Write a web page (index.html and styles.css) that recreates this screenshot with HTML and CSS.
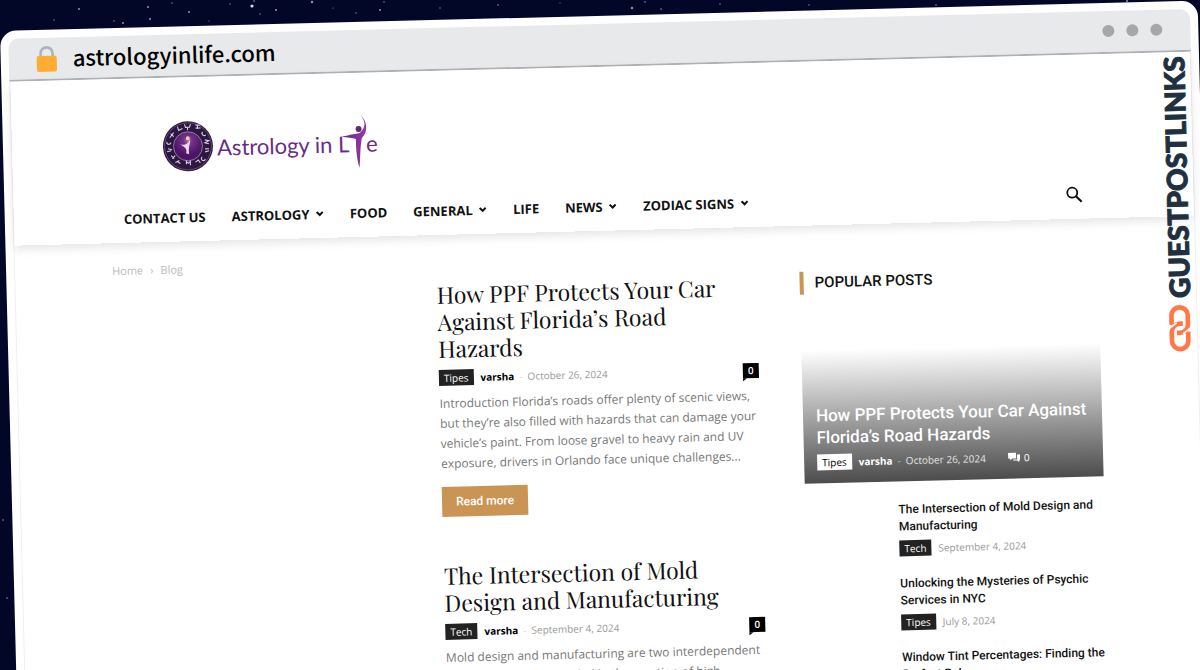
FILE: index.html
```html
<!DOCTYPE html>
<html lang="en">
<head>
<meta charset="utf-8">
<meta name="viewport" content="width=device-width, initial-scale=1">
<title>Astrology in Life - Blog</title>
<link rel="stylesheet" href="styles.css">
</head>
<body>
<svg class="stars" width="1200" height="670" aria-hidden="true">
  <g fill="#8f93b5">
    <circle cx="79" cy="9" r="1"/><circle cx="54" cy="20" r=".7"/><circle cx="114" cy="21" r=".7"/><circle cx="123" cy="23" r="1"/><circle cx="150" cy="19" r="1"/><circle cx="148" cy="7" r="1"/><circle cx="172" cy="3" r=".7"/><circle cx="189" cy="12" r="1"/><circle cx="209" cy="21" r=".6"/><circle cx="230" cy="4" r=".7"/><circle cx="252" cy="6" r="1.6" fill="#d5d7ea"/><circle cx="254" cy="1" r=".8"/><circle cx="260" cy="14" r=".7"/><circle cx="276" cy="10" r="1.1"/><circle cx="312" cy="2" r="1.2"/><circle cx="333" cy="8" r=".6"/><circle cx="356" cy="13" r=".7"/><circle cx="380" cy="10" r="1"/><circle cx="384" cy="2" r=".7"/><circle cx="440" cy="8" r=".7"/><circle cx="498" cy="5" r=".8"/><circle cx="560" cy="3" r=".6"/><circle cx="632" cy="8" r="1.2"/><circle cx="645" cy="2" r=".8"/><circle cx="661" cy="9" r=".8"/><circle cx="720" cy="4" r=".7"/><circle cx="809" cy="5" r=".7"/><circle cx="936" cy="5" r=".8"/><circle cx="1127" cy="1" r="1"/><circle cx="3" cy="520" r=".8"/><circle cx="7" cy="598" r=".8"/>
  </g>
</svg>
<div class="window">
  <div class="toolbar">
    <svg class="lock" width="22" height="28" viewBox="0 0 22 28" aria-hidden="true"><path d="M5 14V8.500a6 6 0 0 1 12 0V14" fill="none" stroke="#a9b4c0" stroke-width="2.600"/><rect x="1" y="11" width="20" height="16" rx="2" fill="#ffac33"/></svg>
    <span class="address">astrologyinlife.com</span>
    <span class="dots"><i></i><i></i><i></i></span>
  </div>
  <div class="page">
    <header class="site-header">
      <div class="container">
        <a class="logo" href="#" aria-label="Astrology in Life">
          <svg width="220" height="56" viewBox="0 0 220 56">
            <defs><radialGradient id="disc" cx=".5" cy=".3"><stop offset="0" stop-color="#b77a8c"/><stop offset=".3" stop-color="#75308a"/><stop offset="1" stop-color="#4a1663"/></radialGradient>
            <linearGradient id="fig" x2="1"><stop offset="0" stop-color="#5c2783"/><stop offset="1" stop-color="#9a37a4"/></linearGradient></defs>
            <circle cx="25" cy="28" r="25" fill="#2d1640"/>
            <circle cx="25" cy="28" r="23.500" fill="none" stroke="#6d5680" stroke-width=".8"/>
            <circle cx="25" cy="28" r="14.500" fill="url(#disc)" stroke="#a58bb0" stroke-width=".8"/>
            <g fill="none" stroke="#d8cbe0" stroke-width="1.100">
              <path d="M22 6l1 3h4l1-3M25 9v3M33 7h5M33 10h5M35 7v4M40 14a2 2 0 1 0 3 3M42 22l4 1-4 2 4 1M42 31h4M42 34l4-1M39 39a2 2 0 1 0 3 2M32 44l3-2 2 3M23 46v-3l2 2 2-2v4M14 43l3 2M12 44l4-2M8 37l3 3M9 40l3-3M5 30l4 1M4 33l4-1M4 23a2 2 0 1 0 4 1M8 15l3 3M11 14l-4 5M15 8l1 4 4-2"/>
            </g>
            <circle cx="25" cy="20" r="2" fill="#f5c8b0"/><path d="M17 26c5 1 8 0 10-5 1 4-2 7-1 15l-3-1c1-4 0-6-6-9z" fill="#ead7ee"/>
            <text class="logo-text" x="54" y="38">Astrology in</text>
            <text class="logo-text" x="175" y="38">L</text>
            <text class="logo-text" x="203" y="38">e</text>
            <circle cx="196" cy="15" r="3" fill="#63297f"/>
            <path d="M198 1c8 7 7 18 1 23-2 9-2 20-3 30-3-10-3-21-3-29-5-1-11-3-17-2 9-2 15-3 21-4 6-5 7-11 1-18z" fill="url(#fig)"/>
          </svg>
        </a>
        <nav class="menu" aria-label="Main">
          <a href="#">CONTACT US</a>
          <a href="#">ASTROLOGY <svg class="chev" viewBox="0 0 8 6"><path d="M1 1l3 3 3-3"/></svg></a>
          <a href="#">FOOD</a>
          <a href="#">GENERAL <svg class="chev" viewBox="0 0 8 6"><path d="M1 1l3 3 3-3"/></svg></a>
          <a href="#">LIFE</a>
          <a href="#">NEWS <svg class="chev" viewBox="0 0 8 6"><path d="M1 1l3 3 3-3"/></svg></a>
          <a href="#">ZODIAC SIGNS <svg class="chev" viewBox="0 0 8 6"><path d="M1 1l3 3 3-3"/></svg></a>
          <button class="search" type="button" aria-label="Search"><svg width="18" height="18" viewBox="0 0 18 18"><circle cx="6.800" cy="6.800" r="5" fill="none" stroke="#111" stroke-width="1.800"/><path d="M10.500 10.500L16 16" stroke="#111" stroke-width="2.200"/></svg></button>
        </nav>
      </div>
    </header>
    <div class="container">
      <div class="crumbs"><a href="#">Home</a><span>›</span><span>Blog</span></div>
      <div class="columns">
        <main class="posts">
          <article class="post">
            <h2><a href="#">How PPF Protects Your Car Against Florida’s Road Hazards</a></h2>
            <div class="meta"><a class="tag" href="#">Tipes</a><a class="author" href="#">varsha</a><span class="dash">-</span><time>October 26, 2024</time><a class="count" href="#">0</a></div>
            <p>Introduction Florida’s roads offer plenty of scenic views, but they’re also filled with hazards that can damage your vehicle’s paint. From loose gravel to heavy rain and UV exposure, drivers in Orlando face unique challenges...</p>
            <a class="more" href="#">Read more</a>
          </article>
          <article class="post">
            <h2><a href="#">The Intersection of Mold Design and Manufacturing</a></h2>
            <div class="meta"><a class="tag" href="#">Tech</a><a class="author" href="#">varsha</a><span class="dash">-</span><time>September 4, 2024</time><a class="count" href="#">0</a></div>
            <p>Mold design and manufacturing are two interdependent processes that are needed in the creation of high</p>
          </article>
        </main>
        <aside class="sidebar">
          <h4>POPULAR POSTS</h4>
          <article class="feature">
            <h3><a href="#">How PPF Protects Your Car Against Florida’s Road Hazards</a></h3>
            <div class="meta"><a class="tag" href="#">Tipes</a><a class="author" href="#">varsha</a><span class="dash">-</span><time>October 26, 2024</time><span class="comments"><svg width="12" height="10" viewBox="0 0 12 10"><path d="M0 0h8v6H4L2 8V6H0zM9 2h3v6h-1v2L9 8H5V7h4z" fill="#fff"/></svg>0</span></div>
          </article>
          <article class="mini"><h3><a href="#">The Intersection of Mold Design and Manufacturing</a></h3><div class="meta"><a class="tag" href="#">Tech</a><time>September 4, 2024</time></div></article>
          <article class="mini"><h3><a href="#">Unlocking the Mysteries of Psychic Services in NYC</a></h3><div class="meta"><a class="tag" href="#">Tipes</a><time>July 8, 2024</time></div></article>
          <article class="mini"><h3><a href="#">Window Tint Percentages: Finding the Perfect Balance</a></h3></article>
        </aside>
      </div>
    </div>
    <div class="brand">
      <span>GUESTPOSTLINKS</span>
      <svg width="24" height="48" viewBox="0 0 22 47" aria-hidden="true"><g fill="none" stroke="#ff7849" stroke-width="4.600"><path d="M3 20V11a8 8 0 0 1 16 0v9a8 8 0 0 1-8 8H8"/><path d="M19 27v9a8 8 0 0 1-16 0v-9a8 8 0 0 1 8-8h3"/></g><path d="M0 24l8-6M14 29l8-6" stroke="#fff" stroke-width="1.600"/></svg>
    </div>
  </div>
</div>
</body>
</html>
```
FILE: styles.css
```css
* { box-sizing: border-box; }
body {
  margin: 0;
  padding: 31px 2px 0 0;
  height: 100vh;
  overflow: hidden;
  background: #030727;
  font-family: "Open Sans", "Noto Sans", sans-serif;
  color: #111;
}
a { color: inherit; text-decoration: none; }
h2, h3, h4, p { margin: 0; }
.stars { position: absolute; top: 0; left: 0; z-index: -1; }

.window {
  min-height: 110vh;
  padding: 8px;
  background: #fff;
  border-radius: 16px;
  transform: rotate(-1.45deg);
  transform-origin: 0 0;
}
.toolbar {
  display: flex;
  align-items: center;
  height: 43px;
  padding: 0 28px 0 27px;
  background: #e7e9eb;
  border-bottom: 2px solid #b1b3b7;
  border-radius: 10px 10px 0 0;
}
.address {
  margin-left: 15px;
  padding-bottom: 4px;
  font: 500 22px/32px "Noto Sans CJK SC", "Noto Sans", sans-serif;
  color: #000;
}
.dots { display: flex; gap: 12px; margin-left: auto; padding-bottom: 2px; }
.dots i { width: 12px; height: 12px; border-radius: 50%; background: #a5a7aa; }
.page {
  position: relative;
  min-height: 100vh;
  border: solid #f0f0f2;
  border-width: 0 1px;
}
.container { max-width: 986px; margin: 0 auto; }

.site-header { padding-top: 41px; box-shadow: 0 4px 10px rgba(0, 0, 0, .1); }
.logo { display: block; width: 220px; height: 56px; margin-left: 54px; }
.logo svg { display: block; }
.logo-text { font: 22px Lato, "Open Sans", sans-serif; fill: #682c88; }
.menu {
  display: flex;
  align-items: center;
  height: 48px;
  margin-top: 19px;
  font-size: 13px;
  font-weight: 700;
}
.menu a { padding: 0 13px; white-space: nowrap; }
.chev { width: 8px; height: 6px; margin: 0 0 2px 3px; fill: none; stroke: #111; stroke-width: 2; }
.search {
  display: grid;
  place-items: center;
  width: 44px;
  height: 44px;
  margin-left: auto;
  padding: 0;
  border: 0;
  background: none;
}

.crumbs {
  display: flex;
  gap: 7px;
  padding: 18px 0 8px;
  font-size: 11px;
  line-height: 20px;
  color: #b9b9b9;
}
.columns { display: grid; grid-template-columns: minmax(0, 1fr) 299px; gap: 43px; }
.posts { display: grid; gap: 45px; align-content: start; padding-left: 324px; }
.post h2 { padding-right: 12px; font: 400 23px/27px "Playfair Display", "Liberation Serif", serif; }
.post p { margin-top: 8px; font-size: 12px; line-height: 20px; color: #777; }
.meta { display: flex; align-items: center; height: 16px; font-size: 10px; white-space: nowrap; }
.post .meta { margin-top: 8px; }
.tag {
  margin-right: 7px;
  padding: 0 5px;
  background: #222;
  color: #fff;
  font-size: 10px;
  line-height: 16px;
}
.author { font-weight: 700; color: #000; }
.dash { margin: 0 5px; color: #ccc; }
time { color: #999; }
.count {
  position: relative;
  width: 16px;
  margin-left: auto;
  background: #000;
  color: #fff;
  font-size: 10px;
  font-weight: 600;
  line-height: 15px;
  text-align: center;
}
.count::after {
  content: "";
  position: absolute;
  top: 100%;
  left: 0;
  border-top: 3px solid #000;
  border-right: 4px solid transparent;
}
.more {
  display: inline-block;
  margin-top: 13px;
  padding: 0 14px;
  background: #ca9455;
  color: #fff;
  font: 500 12px/30px Roboto, sans-serif;
}
.sidebar h4 {
  margin-bottom: 16px;
  padding-left: 11px;
  border-left: 4px solid #ca9455;
  font: 500 15px/23px Roboto, sans-serif;
}
.feature {
  display: flex;
  flex-direction: column;
  justify-content: flex-end;
  height: 173px;
  margin-bottom: 20px;
  padding: 0 13px 13px;
  background: linear-gradient(transparent 23%, rgba(0, 0, 0, .7));
  color: #fff;
}
.feature h3 { font: 500 17px/22px Roboto, sans-serif; }
.feature .meta { margin-top: 6px; }
.feature .tag { background: #fff; color: #000; }
.feature .author { color: #fff; }
.feature time { color: #e4e4e4; }
.comments { display: flex; align-items: center; gap: 4px; margin-left: 22px; }
.mini { margin-bottom: 19px; padding-left: 93px; }
.mini h3 { font: 500 12px/17px Roboto, sans-serif; }
.mini .meta { margin-top: 5px; }

.brand {
  position: absolute;
  top: 4px;
  right: 1px;
  display: flex;
  flex-direction: column;
  align-items: center;
  gap: 6px;
}
.brand span {
  writing-mode: vertical-rl;
  transform: rotate(180deg);
  font: 900 28px/32px "Lato Black", Lato, sans-serif;
  -webkit-text-stroke: 1px #203040;
  color: #203040;
}
```
